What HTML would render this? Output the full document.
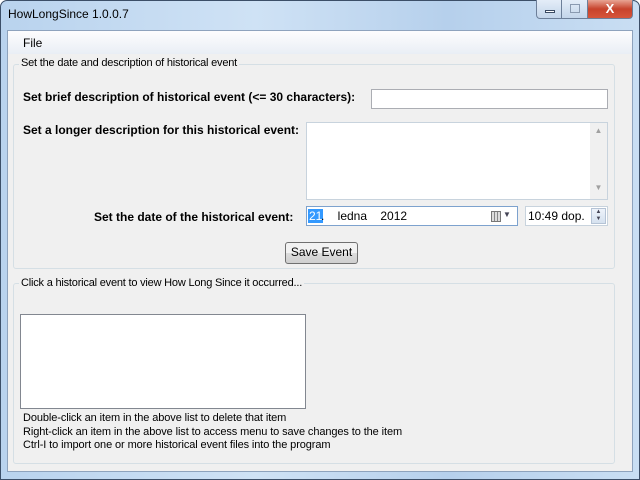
<!DOCTYPE html>
<html><head><style>
*{margin:0;padding:0;box-sizing:border-box}
body{width:640px;height:480px;overflow:hidden;font-family:"Liberation Sans",sans-serif;font-size:11px;color:#000;background:#fff;position:relative}
.frame{position:absolute;left:0;top:0;width:640px;height:480px;background:linear-gradient(90deg,#b9d3ee 0%,#cfe2f5 40%,#b6d0ec 70%,#c9def3 100%);border:1px solid #3c4f68;border-radius:7px 7px 0 0}
.title{position:absolute;left:8px;top:7px;font-size:12px;color:#000}
.client{position:absolute;left:7px;top:30px;width:626px;height:442px;background:#f0f0f0;border:1px solid #8ea3bd}
.menu{position:absolute;left:0;top:0;width:624px;height:23px;background:linear-gradient(#fdfdfe,#e9eef5)}
.menu span{position:absolute;left:15px;top:5px;font-size:12px}
.a{position:absolute}
.gb{position:absolute;border:1px solid #d5dfe5;border-radius:3px}
.gbl{position:absolute;background:#f0f0f0;padding:0 2px;font-size:11px;white-space:nowrap;letter-spacing:-0.2px}
.b{font-weight:bold;font-size:12px;white-space:nowrap;letter-spacing:0}
.in{background:#fff;border:1px solid #abadb3;border-top-color:#abadb3}
.t{white-space:nowrap;letter-spacing:-0.1px}
.btns{position:absolute;top:0;right:7px;height:20px;display:flex}
.btns div{height:19px;border:1px solid #6d7f99;border-top:none}
</style></head><body>
<div class="frame"></div>
<div class="title">HowLongSince 1.0.0.7</div>
<div class="btns">
 <div style="width:26px;border-radius:0 0 0 4px;background:linear-gradient(#e4edf8,#c3d5ea);position:relative"><div style="position:absolute;left:8px;top:10px;width:10px;height:3px;background:#fff;border:1px solid #3b4b63"></div></div>
 <div style="width:26px;background:linear-gradient(#e4edf8,#c3d5ea);border-left:none;position:relative"><div style="position:absolute;left:8px;top:4px;width:10px;height:9px;border:1px solid #8a9ab0"></div></div>
 <div style="width:45px;border-radius:0 0 4px 0;background:linear-gradient(#e8a493,#c7432c 50%,#d7553a);border-left:none;color:#fff;font-weight:bold;font-size:13px;text-align:center;line-height:18px">X</div>
</div>
<div class="client">
 <div class="menu"><span>File</span></div>
</div>
<div class="gb" style="left:13px;top:64px;width:602px;height:205px"></div>
<div class="gbl" style="left:19px;top:57px">Set the date and description of historical event</div>
<div class="a b" style="left:23px;top:90px">Set brief description of historical event (&lt;= 30 characters):</div>
<div class="a in" style="left:371px;top:89px;width:237px;height:20px"></div>
<div class="a b" style="left:23px;top:123px">Set a longer description for this historical event:</div>
<div class="a in" style="left:306px;top:122px;width:302px;height:78px;border-color:#c8d3dd">
 <div style="position:absolute;right:0;top:0;width:17px;height:76px;background:#f0f0f0;color:#a0a0a0;font-size:8px;text-align:center"><div style="margin-top:3px">▲</div><div style="margin-top:48px">▼</div></div>
</div>
<div class="a b" style="left:94px;top:210px">Set the date of the historical event:</div>
<div class="a in" style="left:306px;top:206px;width:212px;height:20px;border-color:#7da2ce">
 <span style="position:absolute;left:1px;top:2px;background:#3399ff;color:#fff;font-size:12px;padding:0 1px">21</span><span style="position:absolute;left:14px;top:2px;font-size:12px;white-space:pre">.    ledna    2012</span>
 <div style="position:absolute;left:184px;top:4px;width:10px;height:11px;border:1px solid #777;background:repeating-linear-gradient(90deg,#ddd 0 2px,#888 2px 3px)"></div>
 <span style="position:absolute;left:196px;top:3px;font-size:8px;color:#445">▼</span>
</div>
<div class="a in" style="left:525px;top:206px;width:83px;height:20px;border-color:#c8d3dd">
 <span style="position:absolute;left:2px;top:2px;font-size:12px">10:49 dop.</span>
 <div style="position:absolute;right:1px;top:1px;width:15px;height:16px;background:linear-gradient(#eef3fa,#d5e1ef);border:1px solid #b5c3d5;font-size:6px;color:#445;text-align:center;line-height:7px">▲<br>▼</div>
</div>
<div class="a" style="left:285px;top:242px;width:73px;height:22px;border:1px solid #707070;border-radius:3px;background:linear-gradient(#f2f2f2 50%,#dddddd 50%,#cfcfcf);font-size:12px;text-align:center;line-height:19px">Save Event</div>
<div class="gb" style="left:13px;top:283px;width:602px;height:181px"></div>
<div class="gbl" style="left:19px;top:277px">Click a historical event to view How Long Since it occurred...</div>
<div class="a" style="left:20px;top:314px;width:286px;height:95px;background:#fff;border:1px solid #828790"></div>
<div class="a t" style="left:23px;top:412px">Double-click an item in the above list to delete that item</div>
<div class="a t" style="left:23px;top:426px">Right-click an item in the above list to access menu to save changes to the item</div>
<div class="a t" style="left:23px;top:439px">Ctrl-I to import one or more historical event files into the program</div>
</body></html>
